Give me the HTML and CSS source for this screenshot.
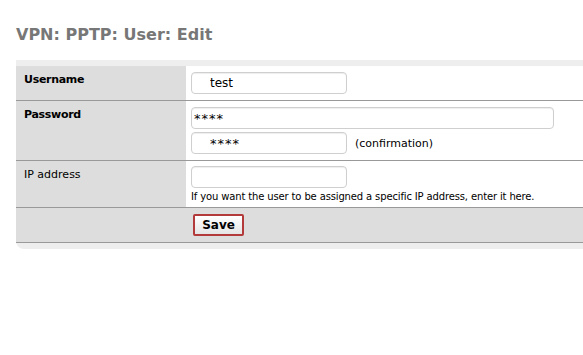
FILE: index.html
```html
<!DOCTYPE html>
<html lang="en">
<head>
<meta charset="UTF-8">
<title>VPN: PPTP: User: Edit</title>
<link rel="stylesheet" href="styles.css">
</head>
<body>

<div class="page">
  <h1 class="pgtitle">VPN: PPTP: User: Edit</h1>

  <div class="panel">
    <table class="tabcont">
      <tr>
        <td class="vncellreq">Username</td>
        <td class="vtable">
          <input type="text" class="formfld indent" value="test">
        </td>
      </tr>
      <tr>
        <td class="vncellreq">Password</td>
        <td class="vtable">
          <input type="text" class="formfld pwd wide" value="****">
          <div class="fldline">
            <input type="text" class="formfld pwd indent" value="****">
            <span class="confirm">(confirmation)</span>
          </div>
        </td>
      </tr>
      <tr>
        <td class="vncell">IP address</td>
        <td class="vtable tall">
          <input type="text" class="formfld" value="">
          <div class="hint">If you want the user to be assigned a specific IP address, enter it here.</div>
        </td>
      </tr>
      <tr class="btnrow">
        <td class="vncell"></td>
        <td class="vtable">
          <button class="formbtn">Save</button>
        </td>
      </tr>
    </table>
  </div>
</div>

</body>
</html>
```

FILE: styles.css
```css
body {
  margin: 0;
  padding: 0;
  background-color: #FFFFFF;
  font-family: 'DejaVu Sans', 'Liberation Sans', sans-serif;
  font-size: 11px;
  color: #000;
}

.page {
  padding: 25px 0 0 16px;
}

.pgtitle {
  margin: 0 0 16px 0;
  font-size: 16px;
  font-weight: bold;
  color: #777777;
}

.panel {
  background-color: #eeeeee;
  padding: 6px 0 6px 0;
  border-bottom-left-radius: 8px;
}

.tabcont {
  width: 100%;
  border-collapse: collapse;
}

.tabcont td {
  border-bottom: 1px solid #999999;
  vertical-align: top;
}

.vncellreq,
.vncell {
  width: 170px;
  background-color: #dddddd;
  padding: 7px 8px;
  box-sizing: border-box;
  line-height: 13px;
}

.vncellreq {
  font-weight: bold;
  letter-spacing: -0.3px;
}

.vtable {
  background-color: #FFFFFF;
  padding: 6px 4px 6px 5px;
}

.vtable.tall {
  padding-top: 5px;
  padding-bottom: 4px;
}

.btnrow .vtable {
  background-color: #dddddd;
  padding: 6px 6px 6px 7px;
}

.formfld {
  display: block;
  width: 156px;
  height: 22px;
  box-sizing: border-box;
  border: 1px solid #cfcfcf;
  border-radius: 4px;
  box-shadow: inset 0 1px 1px #eeeeee;
  padding: 0 2px;
  margin: 0;
  font-family: 'DejaVu Sans', sans-serif;
  font-size: 12px;
  color: #000;
}

.formfld.indent {
  padding-left: 18px;
}

.formfld.pwd {
  font-size: 13px;
  letter-spacing: 1px;
}

.formfld.wide {
  width: 363px;
  margin-bottom: 3px;
}

.fldline {
  display: flex;
  align-items: center;
  gap: 8px;
}

.confirm {
  font-size: 11px;
}

.hint {
  margin-top: 2px;
  font-size: 10px;
  line-height: 13px;
  letter-spacing: -0.14px;
}

.formbtn {
  display: block;
  width: 51px;
  height: 22px;
  border: 2px solid #b23a3a;
  border-radius: 2px;
  background: linear-gradient(#ffffff, #e4e4e4);
  font-family: 'DejaVu Sans', sans-serif;
  font-size: 12px;
  font-weight: bold;
  color: #000;
  padding: 0;
}
```
